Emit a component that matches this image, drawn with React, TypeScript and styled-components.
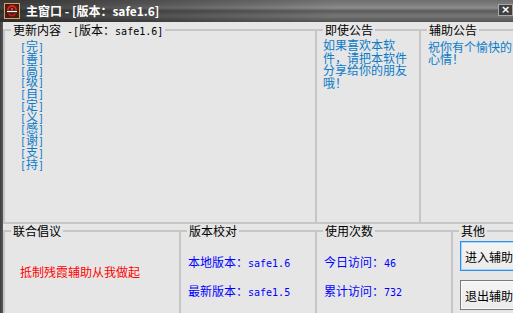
import React from "react";
import styled, { createGlobalStyle } from "styled-components";

const GlobalStyle = createGlobalStyle`
  html, body {
    margin: 0;
    padding: 0;
    background: #e6e6e6;
  }
  body {
    font-family: "Noto Sans CJK SC", "DejaVu Sans", sans-serif;
    font-size: 12px;
  }
`;

const Window = styled.div`
  width: 513px;
  height: 313px;
  overflow: hidden;
  display: flex;
  flex-direction: column;
  background: #e6e6e6;
`;

const TitleBar = styled.div`
  flex: none;
  height: 22px;
  display: flex;
  align-items: center;
  gap: 6px;
  padding-left: 4px;
  background:
    linear-gradient(to right, rgba(15, 15, 15, 0.6) 0%, rgba(15, 15, 15, 0.35) 30%, rgba(0, 0, 0, 0) 65%),
    linear-gradient(
      to bottom,
      #6e6e6e 0px,
      #7a7a7a 4px,
      #8c8c8c 8px,
      #5a5a5a 11px,
      #686868 13px,
      #767676 16px,
      #5e5e5e 20px,
      #555555 22px
    );
`;

const TitleText = styled.span`
  color: #ffffff;
  font-weight: bold;
  font-size: 12px;
  line-height: 14px;
  white-space: nowrap;
`;

const CloseButton = styled.div`
  box-sizing: border-box;
  width: 15px;
  height: 12px;
  margin-left: auto;
  align-self: flex-start;
  margin-top: 4px;
  border: 1px solid #a8a8a8;
  background: #404040;
  color: #ffffff;
  font: bold 11px "DejaVu Sans", sans-serif;
  line-height: 10px;
  display: flex;
  align-items: center;
  justify-content: center;
`;

const Body = styled.div`
  flex: 1;
  display: flex;
  min-height: 0;
`;

const LeftEdge = styled.div`
  flex: none;
  width: 3px;
  background: linear-gradient(to right, #3e3e3e, #5a5a5a);
`;

const Main = styled.div`
  flex: 1;
  display: flex;
  flex-direction: column;
  padding-top: 2px;
`;

const Row = styled.div<{ $h?: number }>`
  display: flex;
  flex: ${(p) => (p.$h ? "none" : "1")};
  height: ${(p) => (p.$h ? `${p.$h}px` : "auto")};
  margin-top: ${(p) => (p.$h ? "0" : "1px")};
`;

const Group = styled.fieldset<{ $w: number; $open?: boolean }>`
  flex: none;
  box-sizing: border-box;
  width: ${(p) => p.$w}px;
  margin: 0;
  padding: 0;
  min-width: 0;
  border: 2px solid #c6c6c6;
  border-right: none;
  ${(p) => (p.$open ? "border-bottom: none;" : "")}
`;

const Legend = styled.legend`
  margin-left: 6px;
  padding: 0 2px;
  font-size: 12px;
  line-height: 12px;
  color: #000000;
  white-space: nowrap;
`;

const Content = styled.div<{ $pad: string; $lh?: number }>`
  padding: ${(p) => p.$pad};
  line-height: ${(p) => p.$lh ?? 12}px;
  white-space: nowrap;
`;

const Note = styled.div<{ $color: string }>`
  color: ${(p) => p.$color};
  font-size: 12px;
`;

const Mono = styled.span`
  font-family: "DejaVu Sans Mono", "Liberation Mono", monospace;
  font-size: 10px;
  line-height: 0;
  white-space: pre;
`;

const InfoList = styled.div`
  display: flex;
  flex-direction: column;
  gap: 17px;
  color: #0000ff;
  line-height: 12px;
  white-space: nowrap;
`;

const ButtonStack = styled.div`
  display: flex;
  flex-direction: column;
  gap: 9px;
  padding: 4px 0 0 7px;
`;

const Button = styled.div<{ $focused?: boolean }>`
  box-sizing: border-box;
  width: 58px;
  height: 30px;
  display: flex;
  align-items: center;
  justify-content: center;
  font-size: 12px;
  color: #000000;
  white-space: nowrap;
  background: linear-gradient(to bottom, #f4f4f4, #ebebeb);
  border: 1px solid ${(p) => (p.$focused ? "#2f8ee8" : "#7a7a7a")};
  box-shadow: inset 0 0 0 1px ${(p) => (p.$focused ? "#a9d5fb" : "#fbfbfb")};
`;

const AppIcon = () => (
  <svg width="16" height="16" viewBox="0 0 16 16">
    <rect x="0.5" y="0.5" width="15" height="15" fill="#4b1c14" stroke="#d9a25c" />
    <path d="M4 7a4 4 0 0 1 8 0" fill="none" stroke="#e3241d" strokeWidth="2" />
    <path d="M3 8.5h10" stroke="#ffffff" strokeWidth="1.2" />
    <path d="M4.5 10.5l2 2h3l2-2" fill="none" stroke="#c81a14" strokeWidth="1.5" />
    <circle cx="8" cy="6" r="1" fill="#ff6a50" />
  </svg>
);

const updates = ["完", "善", "高", "级", "自", "定", "义", "感", "谢", "支", "持"];

export default function App() {
  return (
    <>
      <GlobalStyle />
      <Window>
        <TitleBar>
          <AppIcon />
          <TitleText>主窗口 - [版本：safe1.6]</TitleText>
          <CloseButton>×</CloseButton>
        </TitleBar>
        <Body>
          <LeftEdge />
          <Main>
            <Row $h={200}>
              <Group $w={312}>
                <Legend>
                  更新内容<Mono> -[</Mono>版本：<Mono>safe1.6]</Mono>
                </Legend>
                <Content $pad="4px 0 0 15px" $lh={11.75}>
                  {updates.map((c) => (
                    <Note key={c} $color="#0a7bc8">
                      <Mono>[</Mono>
                      {c}
                      <Mono>]</Mono>
                    </Note>
                  ))}
                </Content>
              </Group>
              <Group $w={104}>
                <Legend>即使公告</Legend>
                <Content $pad="3px 0 0 6px" $lh={12.7}>
                  <Note $color="#0a7bc8">
                    如果喜欢本软
                    <br />
                    件，请把本软件
                    <br />
                    分享给你的朋友
                    <br />
                    哦！
                  </Note>
                </Content>
              </Group>
              <Group $w={130}>
                <Legend>辅助公告</Legend>
                <Content $pad="5px 0 0 7px" $lh={12}>
                  <Note $color="#0a7bc8">
                    祝你有个愉快的
                    <br />
                    心情！
                  </Note>
                </Content>
              </Group>
            </Row>
            <Row>
              <Group $w={176} $open>
                <Legend>联合倡议</Legend>
                <Content $pad="29px 0 0 15px">
                  <Note $color="#ff0000">抵制残霞辅助从我做起</Note>
                </Content>
              </Group>
              <Group $w={136} $open>
                <Legend>版本校对</Legend>
                <Content $pad="19px 0 0 7px">
                  <InfoList>
                    <span>
                      本地版本：<Mono>safe1.6</Mono>
                    </span>
                    <span>
                      最新版本：<Mono>safe1.5</Mono>
                    </span>
                  </InfoList>
                </Content>
              </Group>
              <Group $w={136} $open>
                <Legend>使用次数</Legend>
                <Content $pad="19px 0 0 7px">
                  <InfoList>
                    <span>
                      今日访问：<Mono>46</Mono>
                    </span>
                    <span>
                      累计访问：<Mono>732</Mono>
                    </span>
                  </InfoList>
                </Content>
              </Group>
              <Group $w={90} $open>
                <Legend>其他</Legend>
                <ButtonStack>
                  <Button $focused>进入辅助</Button>
                  <Button>退出辅助</Button>
                </ButtonStack>
              </Group>
            </Row>
          </Main>
        </Body>
      </Window>
    </>
  );
}
